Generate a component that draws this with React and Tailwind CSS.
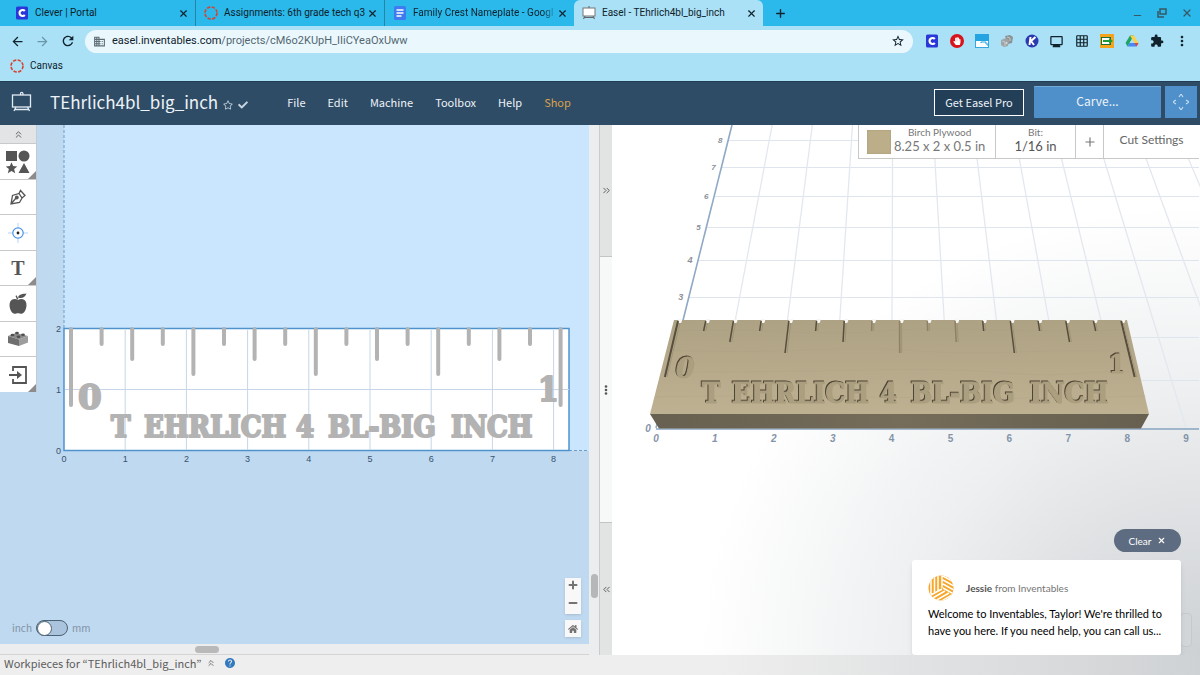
import { useState } from 'react'
import { X, Plus, Minus, ChevronsUp, ChevronsLeft, ChevronsRight } from 'lucide-react'
import { MdDomain, MdRefresh, MdArrowBack, MdArrowForward, MdExtension, MdMoreVert, MdStarBorder, MdGridOn, MdHelp, MdOutlineMonitor } from 'react-icons/md'
import { FaCheck, FaHome, FaHandPaper, FaRegStar } from 'react-icons/fa'

const tabs = [
  { id: 'clever', title: 'Clever | Portal', icon: CleverIcon,   look: 'w-[196px] pl-[15px] border-r border-[#2583a8]' },
  { id: 'canvas', title: 'Assignments: 6th grade tech q3', icon: CanvasRing, look: 'w-[189px] pl-2 border-r border-[#2583a8]' },
  { id: 'docs',   title: 'Family Crest Nameplate - Googl', icon: DocsIcon,   look: 'w-[189px] pl-2', fade: true },
  { id: 'easel',  title: 'Easel - TEhrlich4bl_big_inch', icon: EaselFavicon, look: 'w-[189px] pl-2 rounded-t-md bg-[#abe1f6]' },
]

const menu = ['File', 'Edit', 'Machine', 'Toolbox', 'Help', 'Shop']

const extensions = [
  { name: 'Clever', icon: CleverIcon },
  { name: 'Ad blocker', icon: StopIcon },
  { name: 'Window', icon: WindowIcon },
  { name: 'Dice', icon: DiceIcon },
  { name: 'Kami', icon: KamiIcon },
  { name: 'Screen', icon: () => <MdOutlineMonitor size={15} /> },
  { name: 'Grid', icon: () => <MdGridOn size={14} /> },
  { name: 'Slides', icon: SlidesIcon },
  { name: 'Drive', icon: DriveIcon },
  { name: 'Extensions', icon: () => <MdExtension size={14} /> },
  { name: 'More', icon: () => <MdMoreVert size={16} /> },
]

const tools = [
  { name: 'Shapes', icon: ShapesIcon, more: true },
  { name: 'Pen', icon: PenIcon },
  { name: 'Drill', icon: DrillIcon },
  { name: 'Text', icon: () => <span className="font-['Liberation_Serif',serif] text-[20px] leading-5 font-bold">T</span>, more: true },
  { name: 'Icons', icon: AppleIcon },
  { name: 'Apps', icon: BrickIcon },
  { name: 'Import', icon: ImportIcon, more: true },
]

// Ruler marks, every half unit of the workpiece
const marks = Array.from({ length: 17 }, (_, i) => {
  if (i % 16 === 0) return 'end'
  if (i % 4 === 0) return 'long'
  return i % 2 === 0 ? 'medium' : 'short'
})
const flatEnd = { end: 405, long: 374, medium: 359, short: 344 }
const deepEnd = { end: 377, long: 353, medium: 342, short: 331 }
const deepScale = { end: 1.06, long: 1.035, medium: 1.022, short: 1.011 }

const flatWords = [['T', 111], ['EHRLICH', 144], ['4', 296], ['BL-BIG', 328], ['INCH', 451]]
const deepWords = [['T', 702], ['EHRLICH', 732], ['4', 880], ['BL-BIG', 911], ['INCH', 1030]]

function CleverIcon() {
  return (
    <svg width="14" height="14" viewBox="0 0 14 14">
      <rect x="1" y="0.5" width="12" height="13" rx="1.5" fill="#2a37d8" />
      <path d="M9.8 5A3 3 0 1 0 9.8 9" fill="none" stroke="#fff" strokeWidth="2.2" />
    </svg>
  )
}

function CanvasRing() {
  return (
    <svg width="14" height="14" viewBox="0 0 14 14">
      <circle cx="7" cy="7" r="6" fill="none" stroke="#d8402f" strokeWidth="1.6" strokeDasharray="3.3 1.4" />
    </svg>
  )
}

function DocsIcon() {
  return (
    <svg width="14" height="14" viewBox="0 0 14 14">
      <rect x="1" y="0" width="12" height="14" rx="1.5" fill="#3f7bf0" />
      <path d="M3.5 4h7M3.5 7h7M3.5 10h5" stroke="#fff" strokeWidth="1.4" />
    </svg>
  )
}

function EaselFavicon() {
  return (
    <svg width="14" height="14" viewBox="0 0 14 14">
      <path d="M7 0v3M3 10l-1.5 3M11 10l1.5 3M2 11.5h10" stroke="#666" strokeWidth="1.1" />
      <rect x="1" y="2" width="12" height="8" fill="#fff" stroke="#777" />
    </svg>
  )
}

function StopIcon() {
  return (
    <span className="flex size-[14px] items-center justify-center rounded-full bg-[#d8131b] text-white"><FaHandPaper size={8} /></span>
  )
}

function WindowIcon() {
  return (
    <svg width="14" height="14" viewBox="0 0 14 14">
      <rect x="0.5" y="0.5" width="13" height="13" fill="#fff" stroke="#35a9df" />
      <path d="M0 0h14v7H0z" fill="#25a4e2" />
      <path d="M6 9V8h5v2h2v2" fill="none" stroke="#25a4e2" />
    </svg>
  )
}

function DiceIcon() {
  return (
    <svg width="14" height="14" viewBox="0 0 14 14">
      <path d="M5 2l5-1 3 2-1 6-4 1z" fill="#8b9294" />
      <path d="M1 6l5-2 3 2-1 6-4 1-3-2z" fill="#9fa5a6" />
      <path d="M2 7l3 1v4M7 3l3 1v3" fill="none" stroke="#c4c9ca" />
      <circle cx="6.5" cy="9" r="1" fill="#ddd" />
    </svg>
  )
}

function KamiIcon() {
  return (
    <svg width="14" height="14" viewBox="0 0 14 14">
      <circle cx="7" cy="7" r="6.5" fill="#2a39b0" />
      <path d="M5.5 3L4.5 11M10.5 3L6 7l3 4" fill="none" stroke="#fff" strokeWidth="2" />
    </svg>
  )
}

function SlidesIcon() {
  return (
    <svg width="14" height="14" viewBox="0 0 14 14">
      <rect width="14" height="14" fill="#f5a21c" />
      <rect x="1.5" y="3.5" width="9" height="7" fill="#fff" stroke="#17733a" />
      <path d="M3 6h6V4l4 3-4 3V8H3z" fill="#1c9b3c" />
    </svg>
  )
}

function DriveIcon() {
  return (
    <svg width="14" height="14" viewBox="0 0 14 14">
      <path d="M5 1.5h4L4.5 9l-2 3.5L.5 9z" fill="#1fa463" />
      <path d="M5 1.5h4L13.5 9h-4z" fill="#ffcf48" />
      <path d="M4.500 9h9l-2 3.5h-9z" fill="#4688f4" />
      <path d="M9.500 9h4l-2 3.5z" fill="#e5453a" />
      <path d="M7 5l2.3 4H4.7z" fill="#abe1f6" />
    </svg>
  )
}

function EaselLogo() {
  return (
    <svg width="22" height="22" viewBox="0 0 22 22" fill="none" stroke="#e4ecf3" strokeWidth="1.3">
      <rect x="1.5" y="4" width="18" height="12" />
      <path d="M9.500 4V2.500a1.2 1.2 0 0 1 2.4 0V4M5 16l-2 4M16.500 16l2 4M4 18.500h13.500" />
    </svg>
  )
}

function ShapesIcon() {
  return (
    <svg width="24" height="24" viewBox="0 0 24 24" fill="currentColor">
      <rect x="0" y="1" width="11" height="10" />
      <circle cx="18" cy="6" r="5.5" />
      <path d="M5.5 12.2l1.600 3.900 4.200.300-3.200 2.700 1.100 4.200-3.700-2.300L1.800 23.300l1.100-4.200L-.3 16.400l4.200-.300zM18 13l5.500 10h-11z" />
    </svg>
  )
}

function PenIcon() {
  return (
    <svg width="16" height="16" viewBox="0 0 16 16" fill="none" stroke="currentColor" strokeWidth="1.3">
      <path d="M1 15L2.5 6.5 9 4.5l3 4.5-2.5 4.5zM9 4.5L10.5 1.5 15 6.5 12 9M1 15l5-6" />
      <circle cx="6.8" cy="8.5" r="1.3" fill="currentColor" />
    </svg>
  )
}

function DrillIcon() {
  return (
    <svg width="20" height="20" viewBox="0 0 20 20">
      <path d="M10 0v20M0 10h20" stroke="#b5d5f8" />
      <circle cx="10" cy="10" r="5.2" fill="#fff" stroke="#4c94e8" strokeWidth="1.2" />
      <circle cx="10" cy="10" r="1.4" fill="#222" />
    </svg>
  )
}

function AppleIcon() {
  return (
    <svg width="18" height="22" viewBox="0 0 18 22" fill="currentColor">
      <path d="M9 7c2-1.500 4.500-1.500 6.500 0 2 1.700 2.500 5 1.500 8.500-.8 3-2.600 5.200-4.500 5.300-1.300 0-2.200-.6-3.500-.6s-2.200.6-3.500.6C3.600 20.700 1.800 18.500 1 15.500 0 12 .5 8.700 2.500 7 4.500 5.500 7 5.500 9 7zM8 6.500L6.500 3l1-.8L9.500 6zM9 4.500C10 1 13.500 1 17.500.5 16.500 4 13 6 9 4.500z" />
    </svg>
  )
}

function BrickIcon() {
  return (
    <svg width="20" height="16" viewBox="0 0 20 16">
      <path d="M0 5l8-3 12 3-9 3.500z" fill="#8b8b8b" />
      <path d="M0 5l11 3.500V15L0 12z" fill="#6f6f6f" />
      <path d="M11 8.500L20 5v6.500L11 15z" fill="#9d9d9d" />
      <g fill="#4f4f4f">
        <ellipse cx="4.500" cy="4" rx="1.900" ry="1.200" />
        <ellipse cx="9" cy="2" rx="1.900" ry="1.200" />
        <ellipse cx="10.500" cy="5.700" rx="1.900" ry="1.200" />
        <ellipse cx="15" cy="3.700" rx="1.900" ry="1.200" />
      </g>
    </svg>
  )
}

function ImportIcon() {
  return (
    <svg width="18" height="18" viewBox="0 0 18 18" fill="none" stroke="currentColor" strokeWidth="1.8">
      <path d="M4 5V1h13v16H4v-4" />
      <path d="M0 9h10" strokeWidth="2" />
      <path d="M8 5l5 4-5 4z" fill="currentColor" stroke="none" />
    </svg>
  )
}

function JessieAvatar() {
  return (
    <svg width="26" height="26" viewBox="0 0 26 26" className="shrink-0">
      <defs>
        <clipPath id="avatar"><circle cx="13" cy="13" r="12.5" /></clipPath>
      </defs>
      <g clipPath="url(#avatar)">
        <rect width="26" height="26" fill="#f6a72b" />
        <path d="M3 5v15M6.500 0v17M10 0v15.500M14 0v13M15 1l11 6M15 5l11 6M15 9l11 6M15 13l11 6M1 21l13-7M3 24l14-8M7 26l14-8M12 27l12-7" stroke="#fff" strokeWidth="1.500" />
      </g>
    </svg>
  )
}

function BrowserChrome() {
  return (
    <header className="shrink-0 bg-[#abe1f6] font-[Roboto,sans-serif] text-[#10222c]">
      <div className="flex h-[26px] items-stretch bg-[#2bb8ea]">
        {tabs.map(({ id, title, icon: Icon, look, fade }) => (
          <div key={id} className={`flex min-w-0 items-center pr-1.5 ${look}`}>
            <span className="shrink-0"><Icon /></span>
            <span className={`ml-1.5 flex-1 text-[10px] leading-4 whitespace-nowrap ${fade ? 'mask-r-from-90%' : ''}`}>{title}</span>
            <button aria-label={`Close ${title}`}><X size={11} strokeWidth={2.5} /></button>
          </div>
        ))}
        <button aria-label="New tab" className="px-[11px]"><Plus size={13} strokeWidth={2.5} /></button>
        <div className="ml-auto flex items-center gap-[14px] pr-[7px] text-[#375866]">
          <button aria-label="Minimize" className="pt-1"><Minus size={11} strokeWidth={2.5} /></button>
          <button aria-label="Restore">
            <svg width="10" height="10" viewBox="0 0 10 10" fill="none" stroke="currentColor" strokeWidth="1.5"><path d="M3 1h6v5H3zM1 3v6h6" /></svg>
          </button>
          <button aria-label="Close window"><X size={12} strokeWidth={2.5} /></button>
        </div>
      </div>

      <div className="flex h-[30px] items-center pr-1.5">
        <div className="flex w-[85px] items-center gap-2.5 pl-2.5">
          <button aria-label="Back"><MdArrowBack size={15} /></button>
          <button aria-label="Forward" className="text-[#6a96a8]"><MdArrowForward size={15} /></button>
          <button aria-label="Reload"><MdRefresh size={16} /></button>
        </div>
        <div className="flex h-[23px] min-w-0 flex-1 items-center rounded-full bg-[#eaf8fe] px-2">
          <MdDomain size={13} className="text-[#5d6c73]" />
          <p className="ml-1.5 flex-1 truncate text-[11px] leading-4 text-[#53666f]">
            <span className="text-[#10222c]">easel.inventables.com</span>/projects/cM6o2KUpH_IIiCYeaOxUww
          </p>
          <button aria-label="Bookmark this page"><MdStarBorder size={14} /></button>
        </div>
        <div className="flex items-center pl-1.5">
          {extensions.map(({ name, icon: Icon }) => (
            <button key={name} aria-label={name} className="flex w-[25px] justify-center"><Icon /></button>
          ))}
        </div>
      </div>

      <div className="flex h-[25px] items-start pl-2.5">
        <a href="#canvas" className="flex items-center gap-1.5 pt-[2px] text-[10px] leading-4"><CanvasRing />Canvas</a>
      </div>
    </header>
  )
}

function EaselHeader() {
  return (
    <div className="flex h-11 shrink-0 items-center border-t border-[#213c53] bg-[#2f4c66] pr-[3px] pb-1 pl-[11px] text-[#edf3f8]">
      <EaselLogo />
      <h1 className="ml-[17px] text-[17px] leading-6">TEhrlich4bl_big_inch</h1>
      <button aria-label="Favorite" className="mt-1.5 ml-[5px] text-[#b9c9d6]"><FaRegStar size={10} /></button>
      <FaCheck size={10} className="mt-1.5 ml-[5px] text-[#c7d4df]" />
      <nav className="ml-[39px] flex gap-[22px] text-[11px] leading-5">
        {menu.map(item => (
          <a key={item} href={`#${item.toLowerCase()}`} className={item === 'Shop' ? 'text-[#d9a04d]' : ''}>{item}</a>
        ))}
      </nav>
      <button className="mt-0.5 ml-auto h-[27px] w-[90px] border border-white bg-[#233f58] pb-0.5 text-[11px] leading-5 whitespace-nowrap">Get Easel Pro</button>
      <button className="ml-2.5 h-8 w-[127px] rounded-[1px] bg-[#4f90ca] pb-0.5 text-[12px] leading-5 shadow-[inset_0_1px_0_#70a9da]">Carve...</button>
      <button aria-label="Jog machine" className="ml-1 grid size-8 place-items-center bg-[#4f90ca]">
        <svg width="16" height="16" viewBox="0 0 16 16" fill="none" stroke="#c8def1" strokeWidth="1.1">
          <path d="M6 3l2-3 2 3M6 13l2 3 2-3M3 6L0 8l3 2M13 6l3 2-3 2" />
        </svg>
      </button>
    </div>
  )
}

function ToolPalette() {
  return (
    <div className="absolute top-0 left-0 w-[37px] border-r border-[#c4ccd2] bg-white text-[#555]">
      <button aria-label="Collapse tools" className="flex h-[18px] w-full items-center justify-center bg-[#e3e4e5]"><ChevronsUp size={11} /></button>
      {tools.map(({ name, icon: Icon, more }) => (
        <button key={name} aria-label={name} className="relative flex h-[36px] w-full items-center justify-center border-t border-[#c9c9c9] bg-white odd:h-[35px]">
          <Icon />
          {more && <span className="absolute right-0 bottom-0 border-b-8 border-l-8 border-b-[#8c8c8c] border-l-transparent" />}
        </button>
      ))}
    </div>
  )
}

function DesignCanvas() {
  const [mm, setMm] = useState(false)
  return (
    <section className="relative min-h-0 flex-1 overflow-hidden bg-[#bfd9f0]">
      <svg className="absolute inset-0 size-full" viewBox="0 125 589 519" preserveAspectRatio="xMinYMin slice">
        <rect x="64" y="125" width="600" height="326" fill="#cae5fe" />
        <path d="M64 125v204M569 450.500h95" stroke="#6f9cc4" strokeDasharray="3 2" />
        <rect x="64" y="328.500" width="505" height="122" fill="#fff" stroke="#4f93cd" strokeWidth="1.500" />
        <path d="M65 389.500h504" stroke="#c6d6e8" />
        {[1, 2, 3, 4, 5, 6, 7, 8].map(n => (
          <line key={n} x1={64 + 61.2 * n} x2={64 + 61.2 * n} y1="330" y2="450" stroke="#c6d6e8" />
        ))}
        {marks.map((kind, i) => (
          <line key={i} x1={71 + 30.6 * i} x2={71 + 30.6 * i} y1="329" y2={flatEnd[kind]} stroke="#b3b3b3" strokeWidth="4" strokeLinecap="round" />
        ))}
        <g className="font-['DejaVu_Serif_Condensed','DejaVu_Serif',serif] font-bold" fontSize="29" fill="#b3b3b3" stroke="#b3b3b3" strokeWidth="2" strokeLinejoin="round">
          {flatWords.map(([word, x]) => <text key={word} x={x} y="437">{word}</text>)}
          <text x="78" y="409" fontSize="34" className="font-['DejaVu_Serif',serif]">0</text>
          <text x="538" y="401" fontSize="33">1</text>
        </g>
        <g className="font-['Liberation_Sans',sans-serif]" fontSize="9" fill="#36526d">
          {[0, 1, 2, 3, 4, 5, 6, 7, 8].map(n => <text key={n} x={64 + 61.2 * n} y="462" textAnchor="middle">{n}</text>)}
          {[0, 1, 2].map(n => <text key={n} x="61" y={454 - 61 * n} textAnchor="end">{n}</text>)}
        </g>
      </svg>

      <ToolPalette />

      <label className="absolute bottom-2 left-3 flex items-center gap-1 text-[10px] leading-4 text-[#7f93a5]">
        inch
        <input type="checkbox" role="switch" aria-label="Use millimetres" checked={mm} onChange={e => setMm(e.target.checked)} className="peer sr-only" />
        <span className={`flex h-4 w-8 items-center rounded-full border border-[#4d6274] bg-[#a9c4dc] ${mm ? 'justify-end' : ''}`}>
          <span className="size-[15px] rounded-full border border-[#4d6274] bg-white" />
        </span>
        mm
      </label>

      <div className="absolute right-2 bottom-[7px] flex w-4 flex-col gap-1.5 text-[#737373]">
        <div className="flex flex-col bg-[#f8f8f8] pb-1 shadow-sm">
          <button aria-label="Zoom in" className="flex h-[14px] items-center justify-center"><Plus size={12} strokeWidth={4} /></button>
          <button aria-label="Zoom out" className="mt-1 flex h-[14px] items-center justify-center"><Minus size={12} strokeWidth={4} /></button>
        </div>
        <button aria-label="Reset view" className="flex h-[17px] items-center justify-center bg-[#f8f8f8] shadow-sm"><FaHome size={10} /></button>
      </div>
    </section>
  )
}

function Splitter() {
  return (
    <div className="flex w-[13px] shrink-0 flex-col border-l border-[#c9cccd] bg-[#f7f8f8] text-[#555]">
      <button aria-label="Expand design" className="flex h-[132px] items-center justify-center border-b border-[#c4c4c4] bg-[#e2e3e3]"><ChevronsRight size={11} className="shrink-0" /></button>
      <div className="flex flex-1 items-center justify-center">
        <svg width="4" height="10" viewBox="0 0 4 10" fill="#555"><circle cx="2" cy="1.5" r="1.3" /><circle cx="2" cy="5" r="1.3" /><circle cx="2" cy="8.5" r="1.3" /></svg>
      </div>
      <button aria-label="Expand preview" className="flex h-[133px] items-center justify-center border-t border-[#c4c4c4] bg-[#e2e3e3]"><ChevronsLeft size={11} className="shrink-0" /></button>
    </div>
  )
}

// Perspective of the machine bed: lines close in on the view's centre with height
const bedX = (n, y) => 895 + (656 + 58.9 * n - 895) * (1 - (428 - y) / 953)
const bedRows = [428, 380, 337, 297, 260, 227, 196, 167, 140]

function Preview() {
  return (
    <section className="relative min-w-0 flex-[588] overflow-hidden bg-white bg-radial-[at_100%_100%] from-[#ced1d4] via-[#edeff0] via-35% to-white to-60%">
      <svg className="absolute inset-0 size-full" viewBox="612 125 588 530" preserveAspectRatio="xMinYMin slice">
        <defs>
          <linearGradient id="boardTop" x1="0" y1="0" x2="0" y2="1">
            <stop offset="0" stopColor="#aea284" />
            <stop offset="1" stopColor="#beb192" />
          </linearGradient>
          <linearGradient id="boardFront" x1="0" y1="0" x2="1" y2="0">
            <stop offset="0" stopColor="#676050" />
            <stop offset="0.5" stopColor="#756c59" />
            <stop offset="1" stopColor="#676050" />
          </linearGradient>
        </defs>
        {bedRows.slice(1).map(y => <line key={y} x1={bedX(0, y)} x2="1199" y1={y + 0.5} y2={y + 0.5} stroke="#dfe5ee" />)}
        {Array.from({ length: 12 }, (_, i) => i + 1).map(n => (
          <line key={n} x1={bedX(n, 428)} y1="428" x2={bedX(n, 125)} y2="125" stroke="#e3e8ef" strokeWidth="1.3" />
        ))}
        <line x1="656" y1="428" x2={bedX(0, 125)} y2="125" stroke="#8fa9c6" strokeWidth="1.6" />
        <line x1="656" y1="429" x2="1199" y2="429" stroke="#87a5c3" strokeWidth="1.5" />

        <path d="M674 320H1127L1149 414H650z" fill="url(#boardTop)" />
        <path d="M650 414H1149L1141 428.5H659z" fill="url(#boardFront)" />
        <g stroke="#a89c7d" strokeWidth="0.6" opacity="0.35">
          <path d="M673 331c90-4 140 6 210 0s150 4 246-2M669 350c120 5 160-5 250 1s120-4 212 1M662 371c100 4 250-6 330 1s90-2 143 0M656 397c150-4 300 5 490-1" fill="none" />
        </g>
        {marks.map((kind, i) => {
          const x = 678 + 27.7 * i
          const x2 = 897 + (x - 897) * deepScale[kind]
          return (
            <g key={i}>
              <path d={`M${x} 319h4v2l-1 2h-2z`} fill="#f7f7f5" />
              <line x1={x} y1="321" x2={x2} y2={deepEnd[kind]} stroke={i > 6 && i < 11 ? '#8d8064' : '#574e3d'} strokeWidth={kind === 'end' ? 2 : 1.5} />
              <line x1={x + 2} y1="323" x2={x2 + 2} y2={deepEnd[kind]} stroke="#a09477" />
            </g>
          )
        })}
        <g className="font-['DejaVu_Serif_Condensed','DejaVu_Serif',serif] font-bold drop-shadow-[-1px_-1px_0_#4d4433]" fontSize="28" fill="#ab9f80" stroke="#ab9f80">
          {deepWords.map(([word, x]) => <text key={word} x={x} y="403">{word}</text>)}
          <text x="676" y="378" fontSize="27" className="font-['DejaVu_Serif',serif] italic">0</text>
          <text x="1109" y="373" fontSize="26">1</text>
        </g>
        <g className="font-['Liberation_Sans',sans-serif]" fontSize="10" fontWeight="bold" fill="#8494a8">
          {[0, 1, 2, 3, 4, 5, 6, 7, 8, 9].map(n => <text key={n} x={656 + 58.9 * n} y="442" textAnchor="middle" fontStyle={n > 3 ? 'normal' : 'italic'}>{n}</text>)}
          <text x="648" y="432" textAnchor="middle" fontStyle="italic">0</text>
        </g>
        <g className="font-['Liberation_Sans',sans-serif] italic" fontWeight="bold" fill="#8b919a">
          {[3, 4, 5, 6, 7, 8].map(n => (
            <text key={n} x={bedX(0, bedRows[n]) - 8} y={bedRows[n] + 3} fontSize={n < 5 ? 9 : 8} textAnchor="middle">{n}</text>
          ))}
        </g>
      </svg>

      <div className="absolute top-0 right-px flex h-[34px] items-stretch border-b border-l border-[#c8c8c8] bg-white font-[Lato,sans-serif] text-[#777]">
        <button className="flex w-[136px] items-center gap-[3px] pl-2">
          <span className="size-6 shrink-0 bg-[#bdae8a] shadow-[inset_0_0_2px_#a39673]" />
          <span className="flex flex-col items-center pb-1">
            <span className="text-[10px] leading-3">Birch Plywood</span>
            <span className="text-[13px] leading-4 whitespace-nowrap">8.25 x 2 x 0.5 in</span>
          </span>
        </button>
        <button className="flex w-20 flex-col items-center justify-center border-l border-[#c8c8c8] pb-1">
          <span className="text-[10px] leading-3">Bit:</span>
          <span className="text-[13px] leading-4 text-[#555]">1/16 in</span>
        </button>
        <button aria-label="Add bit" className="flex w-7 items-center justify-center border-l border-[#c8c8c8]"><Plus size={14} strokeWidth={2} /></button>
        <button className="w-24 border-l border-[#c8c8c8] pb-1 text-[12px] leading-5 text-[#666]">Cut Settings</button>
      </div>

      <div className="absolute right-2 bottom-2 h-[34px] w-3 rounded-sm border border-[#c6c9cb] bg-[#d3d6d8]" />
      <div className="absolute right-[19px] bottom-0 flex w-[269px] flex-col items-end gap-2 font-[Lato,sans-serif]">
        <button className="flex h-[23px] w-[67px] items-center justify-center gap-1.5 rounded-full bg-[#5d6c80] text-[10px] leading-4 text-white">Clear <X size={9} strokeWidth={3} /></button>
        <article className="w-full rounded-[3px] bg-white px-4 pt-[15px] pb-4 shadow-md">
          <div className="flex items-center gap-3">
            <JessieAvatar />
            <p className="text-[10px] leading-4 text-[#757575]"><span className="font-bold text-[#555]">Jessie</span> from Inventables</p>
          </div>
          <p className="mt-1 text-[11px] leading-[17px] whitespace-nowrap text-black">
            Welcome to Inventables, Taylor! We're thrilled to<br />have you here. If you need help, you can call us...
          </p>
        </article>
      </div>
    </section>
  )
}

export default function App() {
  return (
    <div className="flex h-screen flex-col overflow-hidden bg-[#eee] font-['Noto_Sans_CJK_KR',sans-serif]">
      <BrowserChrome />
      <EaselHeader />
      <main className="flex min-h-0 flex-1">
        <div className="flex min-w-0 flex-[599] bg-[#ecedee]">
          <div className="flex min-w-0 flex-1 flex-col">
            <DesignCanvas />
            <div className="flex h-[11px] shrink-0 items-center border-b border-[#d4d4d4] pl-[195px]"><span className="h-[7px] w-6 rounded-full bg-[#b9b9b9]" /></div>
          </div>
          <div className="flex w-2.5 shrink-0 flex-col items-center justify-end pb-[57px]"><span className="h-6 w-[7px] rounded-full bg-[#b5b7b8]" /></div>
        </div>
        <Splitter />
        <Preview />
      </main>
      <footer className="flex h-5 shrink-0 items-center gap-1 bg-linear-to-r from-[#eee] from-60% to-[#cfd2d4] pb-1 pl-1 text-[11px] leading-4 text-[#5c5c5c]">
        <button className="flex items-center gap-1">Workpieces for “TEhrlich4bl_big_inch” <ChevronsUp size={10} /></button>
        <button aria-label="Help" className="ml-1 text-[#3479be]"><MdHelp size={12} /></button>
      </footer>
    </div>
  )
}
